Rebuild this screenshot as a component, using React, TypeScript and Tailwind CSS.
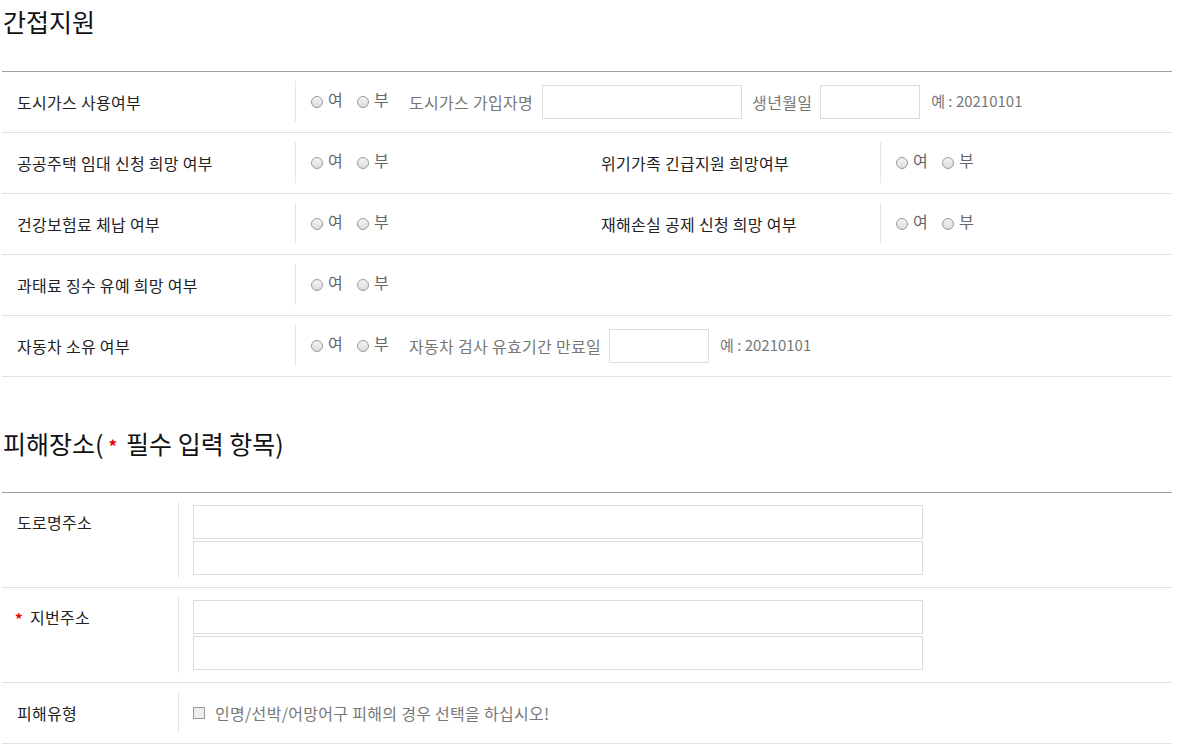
import React from "react";

const FONT = "font-['Noto_Sans_CJK_KR','Noto_Sans',sans-serif]";

function Radio({ label }: { label: string }) {
  return (
    <span className="inline-flex items-center mr-[14px]">
      <span className="inline-block w-[12px] h-[12px] rounded-full border border-[#9a9a9a] bg-gradient-to-b from-[#f4f4f4] to-[#dcdcdc] mr-[5px]" />
      <span className="relative -top-[3px] text-[#666]">{label}</span>
    </span>
  );
}

function YesNo() {
  return (
    <>
      <Radio label="여" />
      <Radio label="부" />
    </>
  );
}

function Box({ w }: { w: string }) {
  return <input type="text" className={`${w} h-[34px] border border-[#dcdcdc] bg-white outline-none`} />;
}

function Row1({ children }: { children: React.ReactNode }) {
  return <div className="flex border-b border-[#e1e1e1] pt-[9px] pb-[10px]">{children}</div>;
}

function Label({ w, children }: { w: string; children: React.ReactNode }) {
  return <div className={`${w} h-[41px] flex items-center pl-[15px] text-[#222]`}>{children}</div>;
}

function Value({ w, children }: { w: string; children?: React.ReactNode }) {
  return (
    <div className={`${w} h-[41px] flex items-center pl-[15px] border-l border-[#e6e6e6] text-[#777]`}>
      {children}
    </div>
  );
}

export default function App() {
  return (
    <div className={`${FONT} text-[16px] tracking-[0.3px] bg-white min-h-[751px] pl-[2px] w-[1172px]`}>
      <h2 className="text-[25px] tracking-normal leading-[36px] mt-[3px] mb-[32px] text-[#111] pl-[1px]">간접지원</h2>
      <div className="border-t border-[#a0a0a0]">
        <Row1>
          <Label w="w-[293px]">도시가스 사용여부</Label>
          <Value w="flex-1">
            <YesNo />
            <span className="ml-[6px] mr-[9px]">도시가스 가입자명</span>
            <Box w="w-[200px]" />
            <span className="ml-[10px] mr-[8px]">생년월일</span>
            <Box w="w-[100px]" />
            <span className="ml-[11px] text-[15px] tracking-normal">예 : 20210101</span>
          </Value>
        </Row1>
        <Row1>
          <Label w="w-[293px]">공공주택 임대 신청 희망 여부</Label>
          <Value w="w-[291px]">
            <YesNo />
          </Value>
          <Label w="w-[294px]">위기가족 긴급지원 희망여부</Label>
          <Value w="flex-1">
            <YesNo />
          </Value>
        </Row1>
        <Row1>
          <Label w="w-[293px]">건강보험료 체납 여부</Label>
          <Value w="w-[291px]">
            <YesNo />
          </Value>
          <Label w="w-[294px]">재해손실 공제 신청 희망 여부</Label>
          <Value w="flex-1">
            <YesNo />
          </Value>
        </Row1>
        <Row1>
          <Label w="w-[293px]">과태료 징수 유예 희망 여부</Label>
          <Value w="flex-1">
            <YesNo />
          </Value>
        </Row1>
        <Row1>
          <Label w="w-[293px]">자동차 소유 여부</Label>
          <Value w="flex-1">
            <YesNo />
            <span className="ml-[6px] mr-[8px]">자동차 검사 유효기간 만료일</span>
            <Box w="w-[100px]" />
            <span className="ml-[11px] text-[15px] tracking-normal">예 : 20210101</span>
          </Value>
        </Row1>
      </div>

      <h2 className="text-[25px] tracking-normal leading-[36px] mt-[48px] mb-[31px] text-[#111] pl-[1px] flex items-center">
        <span>피해장소(</span>
        <span className="text-[#e00] text-[17px] font-bold ml-[5px] mr-[9px] relative top-[3px]">*</span>
        <span>필수 입력 항목)</span>
      </h2>
      <div className="border-t border-[#a0a0a0]">
        <div className="flex border-b border-[#e1e1e1] py-[9px]">
          <div className="w-[176px] pl-[15px] py-[3px] leading-[34px] text-[#222]">도로명주소</div>
          <div className="flex-1 border-l border-[#e6e6e6] pl-[14px] py-[3px] flex flex-col gap-[2px]">
            <Box w="w-[730px]" />
            <Box w="w-[730px]" />
          </div>
        </div>
        <div className="flex border-b border-[#e1e1e1] py-[9px]">
          <div className="w-[176px] pl-[13px] py-[3px] leading-[34px] text-[#222] flex items-start">
            <span className="text-[#e00] font-bold text-[15px] mr-[7px] relative top-[2px]">*</span>
            <span>지번주소</span>
          </div>
          <div className="flex-1 border-l border-[#e6e6e6] pl-[14px] py-[3px] flex flex-col gap-[2px]">
            <Box w="w-[730px]" />
            <Box w="w-[730px]" />
          </div>
        </div>
        <div className="flex border-b border-[#e1e1e1] pt-[9px] pb-[10px]">
          <div className="w-[176px] h-[41px] flex items-center pl-[15px] text-[#222]">피해유형</div>
          <div className="flex-1 h-[41px] border-l border-[#e6e6e6] pl-[14px] flex items-center text-[#777]">
            <span className="inline-block w-[12px] h-[12px] border border-[#999] bg-[#eee] mr-[10px]" />
            <span>인명/선박/어망어구 피해의 경우 선택을 하십시오!</span>
          </div>
        </div>
      </div>
    </div>
  );
}
